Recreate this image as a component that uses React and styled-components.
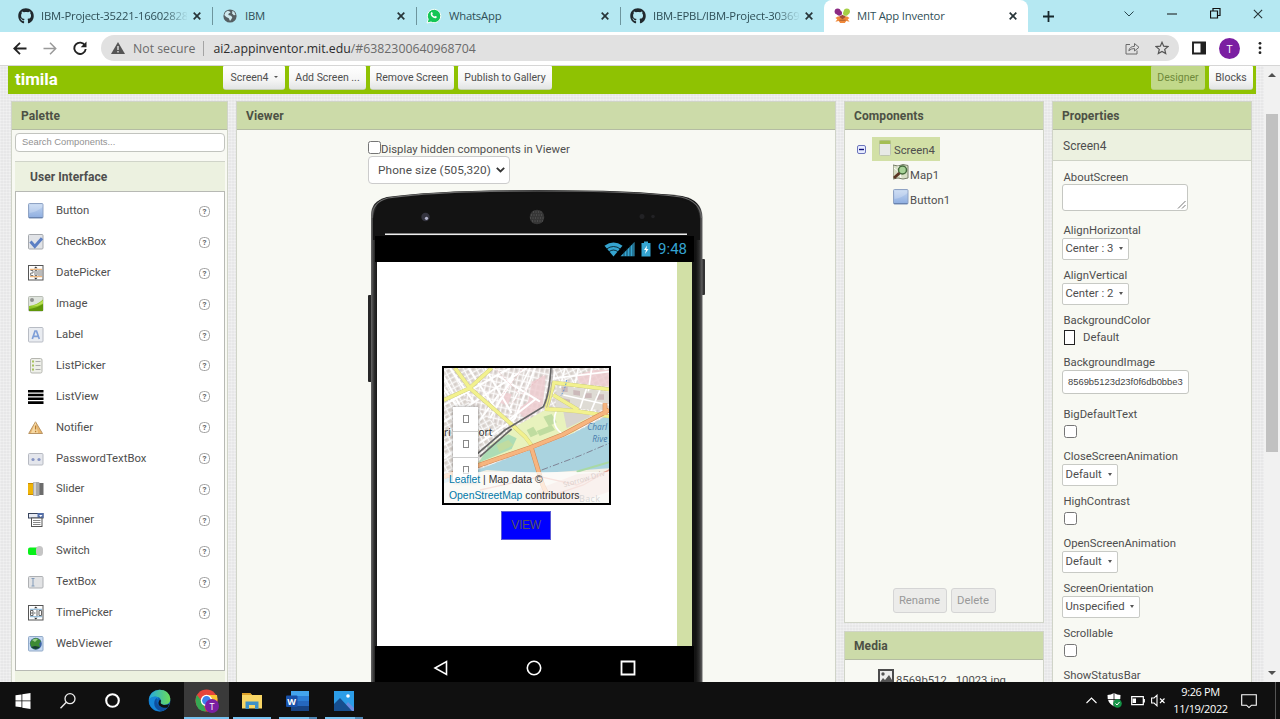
import React from "react";
import styled, { createGlobalStyle } from "styled-components";
import { FaGithub } from "react-icons/fa";

const Global = createGlobalStyle`
  * { box-sizing: border-box; }
  html, body { margin: 0; padding: 0; overflow: hidden; }
  body { font-family: Roboto, "Liberation Sans", sans-serif; font-size: 11.3px; color: #4e4e4e; }
  svg { display: block; flex: none; }
`;

const Window = styled.div`
  width: 1280px;
  height: 719px;
  display: flex;
  flex-direction: column;
  overflow: hidden;
  background: #fff;
`;

/* ---------- browser chrome ---------- */
const TabStrip = styled.div`
  flex: none;
  height: 32px;
  display: flex;
  padding-left: 8px;
  background: #b5e8f2;
  font-family: "Open Sans", "Noto Sans", sans-serif;
`;
const Tab = styled.div`
  width: 204px;
  height: 32px;
  display: flex;
  align-items: center;
  padding: 0 11px 0 10px;
  position: relative;
  color: #2f4f57;
  background: ${(p) => (p.$active ? "#fff" : "transparent")};
  border-radius: ${(p) => (p.$active ? "8px 8px 0 0" : "0")};
`;
const TabIcon = styled.span`
  width: 16px;
  margin-right: 7px;
  display: flex;
  justify-content: center;
`;
const TabTitle = styled.span`
  flex: 1;
  overflow: hidden;
  white-space: nowrap;
  font-size: 11.3px;
  line-height: 18px;
  letter-spacing: -0.2px;
  margin-right: 6px;
  ${(p) => p.$fade && "mask-image: linear-gradient(90deg, #000 84%, transparent 101%);"}
`;
const Separator = styled.i`
  width: 1px;
  height: 18px;
  background: #6d959d;
  position: absolute;
  right: -1px;
  top: 7px;
`;
const NewTab = styled.div`
  width: 40px;
  display: grid;
  place-items: center;
`;
const Controls = styled.div`
  margin-left: auto;
  display: flex;
  width: 173px;
  height: 27px;
  align-items: center;
`;
const Control = styled.div`
  width: 43.3px;
  display: grid;
  place-items: center;
`;
const AddressRow = styled.div`
  flex: none;
  height: 34px;
  display: flex;
  align-items: center;
  padding: 0 6px 1px 5px;
  border-bottom: 1px solid #d6d6d6;
  font-family: "Open Sans", "Noto Sans", sans-serif;
`;
const NavButton = styled.div`
  width: 30px;
  display: grid;
  place-items: center;
`;
const Address = styled.div`
  width: 1078px;
  height: 26px;
  margin-left: 6px;
  border-radius: 13px;
  background: #e1e1e1;
  display: flex;
  align-items: center;
  padding: 0 10px;
  font-size: 12.3px;
  color: #6a6a6a;
  white-space: nowrap;
`;
const Insecure = styled.span`
  margin-left: 8px;
  padding-right: 8px;
  border-right: 1px solid #a4a4a4;
  line-height: 15px;
`;
const Url = styled.span`
  margin-left: 9px;
  flex: 1;
  b { font-weight: 400; color: #2c2c2c; }
`;
const AddressActions = styled.div`
  display: flex;
  gap: 15px;
`;
const BrowserActions = styled.div`
  display: flex;
  flex: 1;
  align-items: center;
  padding-left: 13px;
`;
const Avatar = styled.div`
  width: 21px;
  height: 21px;
  border-radius: 50%;
  background: #7b1fa2;
  color: #fff;
  display: grid;
  place-items: center;
  font-size: 11px;
  margin: 0 18px 0 13px;
`;

/* ---------- page ---------- */
const PageRow = styled.div`
  flex: none;
  height: 616px;
  display: flex;
  overflow: hidden;
`;
const Page = styled.div`
  width: 1264px;
  background-color: #e7e7e8;
  background-image: repeating-linear-gradient(0deg, rgba(255,255,255,.28) 0 1px, transparent 1px 3px),
    repeating-linear-gradient(90deg, rgba(255,255,255,.22) 0 1px, transparent 1px 3px);
`;
const Header = styled.div`
  height: 28px;
  width: 1248px;
  margin-left: 8px;
  padding: 0 3px 4px 7px;
  background: #8fc202;
  display: flex;
`;
const ProjectName = styled.h1`
  margin: 1px 0 0;
  width: 208px;
  color: #fff;
  font-size: 16.9px;
  line-height: 25px;
  font-weight: 700;
`;
const HeaderButton = styled.div`
  width: ${(p) => p.$w}px;
  height: 24px;
  margin-right: ${(p) => (p.$last ? 0 : 4)}px;
  border-radius: 1px 1px 3px 3px;
  padding-bottom: 1px;
  display: flex;
  align-items: center;
  justify-content: center;
  gap: 5px;
  white-space: nowrap;
  font-size: 10.5px;
  color: ${(p) => (p.$off ? "#6f8a3b" : "#4e4e4e")};
  background: ${(p) => (p.$off ? "#c1d88a" : "linear-gradient(#fff, #f5f5f5 60%, #e2e4e4)")};
  border-bottom: 1px solid ${(p) => (p.$off ? "#b0cc70" : "#c3cdb0")};
`;
const Spacer = styled.div`flex: 1;`;
const Caret = styled.i`
  border: ${(p) => p.$s || 2.5}px solid transparent;
  border-top: ${(p) => (p.$s || 2.5) + 0.5}px solid #555;
  border-bottom: 0;
`;
const Panels = styled.div`
  display: flex;
  align-items: flex-start;
  padding: 7px 0 0 11px;
  gap: 8px;
`;
const Column = styled.div`
  display: flex;
  flex-direction: column;
  gap: 8px;
`;
const Panel = styled.section`
  width: ${(p) => p.$w}px;
  height: ${(p) => p.$h || 700}px;
  border: 1px solid #d0d4c8;
  background: #f8f9f3;
  display: flex;
  flex-direction: column;
  overflow: hidden;
`;
const PanelTitle = styled.h2`
  flex: none;
  margin: 0;
  height: 28px;
  padding: 0 9px;
  background: #ccdba9;
  border-bottom: 1px solid #b4bca3;
  font-size: 12px;
  line-height: 29px;
  font-weight: 700;
  letter-spacing: 0.1px;
  color: #4c5145;
`;

/* ---------- palette ---------- */
const Search = styled.div`
  height: 19px;
  margin: 3px 2px 0 3px;
  border: 1px solid #c2c4bf;
  border-radius: 4px;
  background: #fff;
  padding: 0 6px;
  font: 9.4px/16px "Liberation Sans", sans-serif;
  color: #929292;
`;
const Category = styled.div`
  height: 30px;
  margin: 9px 2px 0 3px;
  padding-left: 15px;
  background: #ecf1e0;
  border-top: 1px solid #d0d4c9;
  font-size: 12px;
  font-weight: 700;
  line-height: 31px;
  letter-spacing: 0.05px;
`;
const PaletteList = styled.div`
  height: 480px;
  margin: 0 2px 0 3px;
  border: 1px solid #b7b9b4;
  background: #fff;
  padding: 4px 0;
`;
const PaletteItem = styled.div`
  height: 30.9px;
  display: flex;
  align-items: center;
  padding: 0 14px 0 12px;
  span { flex: 1; margin: 0 0 1px 12px; white-space: nowrap; }
`;
const Help = styled.i`
  width: 11px;
  height: 11px;
  border: 1px solid #a2a2a2;
  border-radius: 4.5px;
  font: 700 8px/9px Roboto, sans-serif;
  text-align: center;
  color: #666;
`;
const NextCategory = styled.div`
  height: 30px;
  margin: 0 2px 0 3px;
  background: #ecf1e0;
`;

/* ---------- viewer ---------- */
const ViewerBody = styled.div`
  margin-left: 131px;
`;
const CheckRow = styled.div`
  display: flex;
  height: 15px;
  margin-top: 11px;
  span { line-height: 18px; letter-spacing: 0.03px; white-space: nowrap; }
`;
const Check = styled.i`
  width: 13px;
  height: 13px;
  border: 1px solid #767676;
  border-radius: 2.5px;
  background: #fff;
`;
const SizeSelect = styled.div`
  width: 142px;
  height: 28px;
  border: 1px solid #ccc;
  border-radius: 4px;
  background: #fff;
  display: flex;
  align-items: center;
  justify-content: space-between;
  padding: 0 4px 0 9px;
  font-size: 11.8px;
  letter-spacing: 0.12px;
`;
const Phone = styled.div`
  display: grid;
  width: 340px;
  height: 500px;
  margin-top: 6px;
  > * { grid-area: 1 / 1; }
`;
const PhoneFront = styled.div`
  z-index: 1;
  margin: 46px 0 0 7px;
  width: 319px;
  display: flex;
  flex-direction: column;
`;
const StatusBar = styled.div`
  height: 26px;
  background: #000;
  display: flex;
  align-items: center;
  justify-content: flex-end;
  gap: 6px;
  padding-right: 7px;
  font-size: 15px;
  color: #35a4d0;
`;
const Screen = styled.div`
  height: 384px;
  margin: 0 2px;
  background: #fff;
  border-right: 15px solid #d2e0a6;
  display: flex;
  flex-direction: column;
  align-items: center;
  padding: 104px 1px 0 0;
`;
const NavBar = styled.div`
  height: 44px;
  background: #000;
  display: flex;
  justify-content: space-around;
  padding: 14px 19.5px 0 19px;
`;
const MapFrame = styled.div`
  width: 169px;
  height: 139px;
  border: 2px solid #000;
  display: grid;
  overflow: hidden;
  > * { grid-area: 1 / 1; }
`;
const MapControls = styled.div`
  width: 25px;
  height: 76px;
  margin: 39px 0 0 9px;
  background: #fff;
  box-shadow: 0 0 3px rgba(0,0,0,.45);
  display: grid;
  grid-template-rows: repeat(3, 25.3px);
  div { display: grid; place-items: center; border-bottom: 1px solid #ccc; }
  i { width: 6px; height: 8px; border: 1px solid #888; }
`;
const Attribution = styled.div`
  align-self: end;
  height: 31px;
  padding-left: 5px;
  background: rgba(255,255,255,.7);
  font: 10.4px/16px "Liberation Sans", sans-serif;
  color: #333;
  white-space: nowrap;
  z-index: 1;
  b { font-weight: 400; color: #0078a8; }
`;
const ViewButton = styled.div`
  width: 50px;
  height: 29px;
  margin: 6px 1px 0 0;
  background: #00f;
  border: 1px solid #5c5cd8;
  font: 12px/27px "Liberation Sans", sans-serif;
  letter-spacing: -0.3px;
  text-align: center;
  color: #55555c;
`;

/* ---------- components / media ---------- */
const Tree = styled.div`
  flex: 1;
  padding: 7px 0 0 12px;
`;
const TreeRoot = styled.div`
  display: flex;
  align-items: center;
  height: 24px;
`;
const Selected = styled.div`
  margin-left: 6px;
  width: 68px;
  height: 24px;
  background: #d2e0a6;
  display: flex;
  padding: 3px 0 0 7px;
  gap: 3px;
  span { line-height: 22px; }
`;
const TreeLeaf = styled.div`
  height: 25px;
  margin-left: 36px;
  padding-top: 3px;
  display: flex;
  gap: 1px;
  span { line-height: 23px; letter-spacing: 0.1px; }
`;
const PanelActions = styled.div`
  display: flex;
  gap: 4px;
  justify-content: center;
  padding-bottom: 9px;
`;
const DisabledButton = styled.div`
  width: ${(p) => p.$w}px;
  height: 25px;
  border: 1px solid #d5d5d5;
  border-radius: 3px;
  background: #ececea;
  color: #999;
  text-align: center;
  line-height: 24px;
`;
const MediaItem = styled.div`
  display: flex;
  margin: 9px 0 0 33px;
  gap: 2px;
  span { line-height: 23px; }
`;

/* ---------- properties ---------- */
const Target = styled.div`
  height: 31px;
  background: #ecf1e0;
  border-bottom: 1px solid #ced2c6;
  padding-left: 10px;
  font-size: 12px;
  line-height: 32px;
`;
const PropertyList = styled.div`
  padding: 8px 0 0 9px;
`;
const Property = styled.div`
  height: ${(p) => p.$h}px;
`;
const PropertyName = styled.div`
  height: 15px;
  line-height: 17px;
  padding-left: 1.5px;
`;
const TextArea = styled.div`
  width: 126px;
  height: 27px;
  border: 1px solid #c5c7c2;
  border-radius: 3px;
  background: #fff;
  display: flex;
  align-items: flex-end;
  justify-content: flex-end;
  padding: 1px;
`;
const Dropdown = styled.div`
  width: ${(p) => p.$w}px;
  height: 22px;
  margin-top: 1px;
  border: 1px solid #c8cac5;
  border-radius: 2px;
  background: #fff;
  display: flex;
  align-items: center;
  justify-content: space-between;
  padding: 0 5px 2px 2.5px;
`;
const PropertyCheck = styled(Check)`
  display: block;
  margin: 4px 0 0 2px;
`;
const ColorRow = styled.div`
  display: flex;
  align-items: center;
  gap: 8px;
  height: 20px;
  padding-left: 2px;
`;
const Swatch = styled.i`
  width: 11px;
  height: 15px;
  border: 1px solid #222;
  background: #fff;
`;
const AssetField = styled.div`
  width: 127px;
  height: 24px;
  margin-top: 1px;
  border: 1px solid #c5c7c2;
  border-radius: 3px;
  background: #fff;
  padding-left: 5px;
  font: 9.4px/22px "Liberation Sans", sans-serif;
  color: #444;
`;
const Scrollbar = styled.div`
  width: 16px;
  background: #f1f1f1;
  display: flex;
  flex-direction: column;
  align-items: center;
  padding: 7px 0 7px;
`;
const Thumb = styled.div`
  width: 12px;
  height: 338px;
  margin: 37px 0 auto;
  background: #c1c1c1;
`;
const Arrow = styled.i`
  border: 4px solid transparent;
  ${(p) => (p.$up ? "border-top: 0; border-bottom-color: #505050;" : "border-bottom: 0; border-top-color: #505050;")}
`;

/* ---------- taskbar ---------- */
const Taskbar = styled.div`
  height: 37px;
  background: #101010;
  display: flex;
  color: #fff;
`;
const TaskItem = styled.div`
  width: ${(p) => p.$w || 45}px;
  display: grid;
  place-items: center;
  background: ${(p) => (p.$active ? "#3a3a3a" : "transparent")};
  box-shadow: ${(p) => (p.$active ? "inset 0 -2px #76c1f0" : "none")};
`;
const Running = styled(TaskItem)`
  background: linear-gradient(90deg, #76c1f0 ${(p) => (p.$multi ? 80 : 100)}%, #5088b5 0) bottom / 38px 2px no-repeat;
`;
const Tray = styled.div`
  margin-left: auto;
  width: 195px;
  display: flex;
  align-items: center;
`;
const TrayIcon = styled.div`
  width: ${(p) => p.$w}px;
  display: grid;
  place-items: center;
`;
const Clock = styled.div`
  width: 59px;
  text-align: center;
  font: 11px/17px "Open Sans", sans-serif;
  letter-spacing: -0.4px;
  margin-top: -1px;
`;
const ShowDesktop = styled.div`
  margin-left: auto;
  width: 5px;
  height: 37px;
  border-left: 1px solid #555;
`;

/* ---------- icons ---------- */
const CloseX = ({ s = 8, c = "#273539", w = 1.7 }) => (
  <svg width={s} height={s} viewBox="0 0 8 8"><path d="M.7.7l6.6 6.6M7.3.7L.7 7.3" stroke={c} strokeWidth={w} /></svg>
);
const Globe = () => (
  <svg width="14" height="14" viewBox="0 0 14 14">
    <circle cx="7" cy="7" r="6.6" fill="#555f63" />
    <path d="M2.500 3.200l2.200-1.400 2 .6.800 1.200-1.800 1-.4 1.500L8 6.800l1.300 1.500-.8 1.700L7 12 5.800 9.300 3.200 8 1.300 6z" fill="#cfe9ee" />
    <path d="M9.300 1.800l2 1.300L12.500 6l-1.700.2L9.200 4.600z" fill="#cfe9ee" />
  </svg>
);
const MitLogo = () => (
  <svg width="17" height="16" viewBox="0 0 18 17">
    <circle cx="3.800" cy="3.800" r="3.200" fill="#8c2a83" /><circle cx="5.700" cy="5.400" r="2.800" fill="#8c2a83" />
    <circle cx="13.600" cy="3.800" r="3.300" fill="#a5cf45" /><circle cx="12.300" cy="5.600" r="2.700" fill="#a5cf45" />
    <path d="M4 9h10l2.500 1.500-2 1.500 2 2.500-3.500-.7-1.500 2.200h-5L5 13.800l-3.500.7 2-2.500-2-1.500z" fill="#f0893a" />
    <path d="M5.400 9.400L9 7.300l3.600 2.100L9 12z" fill="#a14e35" />
    <path d="M5.700 13h6.600" stroke="#b0612f" strokeWidth="1.200" />
  </svg>
);
const WhatsAppIcon = () => (
  <svg width="16" height="16" viewBox="0 0 16 16">
    <path d="M1 15l1.200-3.700A6.700 6.700 0 1 1 5 14z" fill="#14c656" stroke="#fff" strokeWidth="1" />
    <g transform="translate(3.5 3.3) scale(.7)"><path d="M2.400 1.600c.5-.8 1.300-.6 1.700.2l.6 1.500-.8 1.200C4.600 6 5.700 6.900 7.200 7.600l1.100-1 1.900 1c.5.4.2 1.500-.6 2C6.800 11.400 1.200 7 1.700 3.300z" fill="#fff" /></g>
  </svg>
);

const Box = ({ children }) => <svg width="16" height="16" viewBox="0 0 16 16">{children}</svg>;
const frame = { x: 0.5, y: 0.5, width: 14.5, height: 14.5, rx: 1 };
const icons = {
  Button: (
    <Box>
      <defs><linearGradient id="blue" x2="0" y2="1"><stop stopColor="#c4d7f1" /><stop offset="1" stopColor="#8dade0" /></linearGradient></defs>
      <rect {...frame} fill="url(#blue)" stroke="#8fa3c4" /><path d="M1.500 10Q9 9 14.500 4V1.500h-13z" fill="#fff" opacity=".22" />
      <path d="M1 14.600h13.600" stroke="#667fac" />
    </Box>
  ),
  CheckBox: <Box><rect {...frame} fill="#e1e3e7" stroke="#a5a8ad" /><path d="M2.500 7.500l4.300 5L14 4.200" fill="none" stroke="#5c7fc4" strokeWidth="3" /></Box>,
  DatePicker: (
    <Box><rect {...frame} rx="0" fill="#fff" stroke="#555" /><path d="M6 3.300L7.800 1.500l1.800 1.800zM6 12.700l1.800 1.800 1.800-1.800z" fill="#333" />
      <path d="M2 4.300h12M2 11.700h12" stroke="#eba55f" /><path d="M2.500 5.500h2.500v2.500H2.700v2.500h2.600M7 5.500h2v5H7zM11 5v6M13 5v6" fill="none" stroke="#777" /></Box>
  ),
  Image: (
    <Box><rect {...frame} fill="#dfe4dd" stroke="#b8bdb5" /><circle cx="4" cy="4" r="2" fill="#8e918e" />
      <path d="M1 10Q9 9 15 3.500V15H1z" fill="#8fc529" /><path d="M1 13Q9 12 15 8v7H1z" fill="#5f960a" /><path d="M3 10Q9 9.500 15 4.500v3Q9 11 3 10z" fill="#b8df52" /></Box>
  ),
  Label: <Box><rect {...frame} fill="#e9ecf1" stroke="#b8bcc4" /><path d="M4.300 12L7 4h1.500l2.800 8M5.400 9.300h4.800" fill="none" stroke="#7f9fd8" strokeWidth="1.700" /></Box>,
  ListPicker: (
    <Box><rect x="2.500" y=".5" width="11.500" height="14.500" rx="1.500" fill="#eeefe9" stroke="#b5b6b0" />
      <path d="M4 3.500h2M4 7.500h2M4 11.500h2" stroke="#a6c25c" strokeWidth="1.800" /><path d="M7.500 3.500h5M7.500 7.500h5M7.500 11.500h5" stroke="#aaa" /></Box>
  ),
  ListView: <Box><path d="M0 2.300h15.500M0 6h15.500M0 9.800h15.500M0 13.600h15.500" stroke="#000" strokeWidth="2.600" /></Box>,
  Notifier: <Box><path d="M7.500 1.800L14.500 13.500H.7z" fill="#e9b66d" stroke="#b99565" /><path d="M7.500 2L10 13H3z" fill="#f6d9a4" /><path d="M7.600 5.500v4M7.600 10.800v1.500" stroke="#b87d2e" strokeWidth="1.300" /></Box>,
  PasswordTextBox: <Box><rect x=".5" y="2.500" width="14.500" height="11.500" rx="1" fill="#e4e6ec" stroke="#b7bac2" /><circle cx="5" cy="8.500" r="1.600" fill="#8795c3" /><circle cx="11" cy="8.500" r="1.600" fill="#8795c3" /></Box>,
  Slider: <Box><rect y="2" width="6" height="12" fill="#efb408" /><rect x="10" y="2" width="5.500" height="12" fill="#6c6c6c" /><rect x="5" y="1" width="6.500" height="14" rx="1" fill="#aaa" /><path d="M7 1.500v13" stroke="#e2e2e2" strokeWidth="1.500" /><path d="M0 2.500h5M0 13.500h5" stroke="#c98b00" /></Box>,
  Spinner: <Box><rect x=".5" y="1.500" width="14.500" height="4.500" fill="#e6eaf3" stroke="#37435c" /><rect x="9.500" y="1" width="6" height="5" fill="#536fab" /><path d="M11 3h3.500L12.700 5z" fill="#fff" /><rect x="3.500" y="6" width="10.500" height="8.500" fill="#fff" stroke="#555" /><path d="M5 8.500h7.500M5 10.500h7.500M5 12.500h7.500" stroke="#888" /></Box>,
  Switch: <Box><rect y="4.500" width="13" height="7.500" rx="2" fill="#08f019" /><rect x="8" y="3" width="7" height="10" rx="3.500" fill="#c5c5c5" /></Box>,
  TextBox: <Box><rect x=".5" y="2.500" width="14.500" height="11.500" rx="1" fill="#e2e3e5" stroke="#aeb0b3" /><path d="M3.500 4.500h3M3.500 12h3M5 4.500V12" stroke="#829bb8" /></Box>,
  TimePicker: (
    <Box><rect {...frame} rx="0" fill="#fff" stroke="#555" /><path d="M6 3.300L7.800 1.500l1.800 1.800zM6 12.700l1.800 1.800 1.800-1.800z" fill="#333" />
      <path d="M2 4.300h12M2 11.700h12" stroke="#7eaed1" /><path d="M2.500 5.500h2.500v5H2.500zM2.500 8H5M6 8h1.500M9 5v6M11 5.500h2.500v5H11z" fill="none" stroke="#666" /></Box>
  ),
  WebViewer: <Box><rect {...frame} fill="#c7daf1" stroke="#92aac8" /><circle cx="7.800" cy="7.800" r="6" fill="#3d64a5" /><path d="M2 7Q4 2 9 2l4 3-2 3 1 3-4 2.500Q3 13 2 7z" fill="#3d8b34" /><path d="M4 4Q7 2 10 3L7 6z" fill="#98cc88" /><path d="M3 11q5 4 9 0l-5-1z" fill="#173e39" /></Box>,
};
const Star = () => (
  <svg width="14" height="14" viewBox="0 0 14 14"><path d="M7 1.300l1.700 3.900 4.200.4-3.200 2.800 1 4.200L7 10.400l-3.700 2.200 1-4.200L1.100 5.600l4.200-.4z" fill="none" stroke="#555" strokeWidth="1.200" /></svg>
);

const roads = { fill: "none", stroke: "#fff", strokeWidth: 6 };
const MapPicture = () => (
  <svg width="165" height="135" viewBox="42 39 495 405" preserveAspectRatio="none">
    <defs>
      <pattern id="blocks" width="17" height="15" patternUnits="userSpaceOnUse" patternTransform="rotate(-28)">
        <rect width="17" height="15" fill="#e4dfdc" /><path d="M0 1h17M1 0v15" stroke="#fff" strokeWidth="3" /><path d="M5 5h8v6H5z" fill="#d2cbc5" />
      </pattern>
      <pattern id="blocks2" width="15" height="18" patternUnits="userSpaceOnUse" patternTransform="rotate(12)">
        <rect width="15" height="18" fill="#e7e0dd" /><path d="M0 1h15M1 0v18" stroke="#fff" strokeWidth="3" /><path d="M5 5h6v9H5z" fill="#d0c9c6" />
      </pattern>
    </defs>
    <rect x="42" y="39" width="495" height="405" fill="url(#blocks)" />
    <path d="M190 39H375L350 160 240 240 100 130z" fill="url(#blocks2)" />
    <path d="M305 80l42-20-8 90-50 45-30-30 35-25zM220 110l25 8-12 35-28-12zM440 60l50-15h47v50l-90-10z" fill="#edcdd0" opacity=".85" />
    <path d="M380 90l157 20v55l-160-5z" fill="#dedbd4" />
    <path d="M395 95h18v16h-18zM430 105l20 3v14l-20-3zM465 115h20v14h-20zM500 118h22v16h-22zM400 130l20 4v12l-20-4z" fill="#cbb9b9" />
    <path d="M140 330L180 270 255 215 345 165 420 165 480 195 430 235 300 275 140 335z" fill="#e8f2bd" />
    <path d="M142 330L175 275 235 238 260 250 245 282 142 325z" fill="#addcb5" />
    <path d="M200 270l35-15 15 16-42 20zM290 225l20-10 14 22-22 10zM340 185l25-8 15 25-24 12zM320 228l45-18 10 15-46 18z" fill="#c0dca0" />
    <path d="M400 170l45-10 35 25-70 35z" fill="#d8d4ce" />
    <path d="M42 372L150 342 300 285 430 235 537 180V352L430 362 145 444H42z" fill="#aad3df" />
    <path d="M42 385L170 345 330 355 537 340V444H42z" fill="#f2efe4" />
    <path d="M330 400l110-42 97-8v60L440 444H300z" fill="#e8c4ba" opacity=".7" />
    <path d="M440 350L537 322" stroke="#a9d9a4" strokeWidth="6" />
    <g {...roads}>
      <path d="M42 150L240 39M42 200L290 39M60 39l70 100M115 39l80 120M165 39l80 135M42 100l85 120M95 150l75 100M140 270L255 190 315 39M42 270l100-60M42 310l70-50M180 190l70-120M230 200l90-70M200 60l130 80M200 155l50-100M42 65l50 90M120 235l85-115" />
      <path d="M375 50l-10 50M405 39l-15 60M445 39l-12 60M485 39l-10 70M370 70l167-20M400 120l137 30M470 100l-20 60M510 105l-30 70M380 165Q360 210 395 235M300 39l-60 120" strokeWidth="5" />
    </g>
    <path d="M195 39l70 75M280 39l-70 90M340 60l-95 85" stroke="#e4a8ae" strokeWidth="1.500" strokeDasharray="4 3" fill="none" />
    <g fill="none" stroke="#c8c57d" strokeWidth="12">
      <path d="M75 39L120 100 230 195 285 245 310 278M42 135L118 100 185 39M350 158L372 83 537 103M370 120L445 165M345 162Q440 165 537 184" />
    </g>
    <g fill="none" stroke="#f2f18e" strokeWidth="10">
      <path d="M75 39L120 100 230 195 285 245 310 278M42 135L118 100 185 39M350 158L372 83 537 103M370 120L445 165M345 162Q440 165 537 184" />
    </g>
    <g fill="none" stroke="#666" strokeWidth="5"><path d="M140 298L225 225 340 155Q358 120 363 39M150 305L245 222" /><path d="M350 158Q366 110 368 39" stroke="#999" strokeWidth="2" /></g>
    <g fill="none" stroke="#cd8856" strokeWidth="14"><path d="M42 365L140 333 300 278 400 238 500 185 537 165M303 275L338 390 350 415M525 145v35" /></g>
    <g fill="none" stroke="#f7b57f" strokeWidth="11"><path d="M42 365L140 333 300 278 400 238 500 185 537 165M303 275L338 390 350 415M525 145v35" /></g>
    <path d="M335 345L450 302 537 265" stroke="#7f8496" strokeWidth="3" strokeDasharray="20 6 4 6" fill="none" />
    <path d="M150 405L330 365 440 390 537 345M370 420l90-30 77-45" fill="none" stroke="#e09f90" strokeWidth="4" />
    <path d="M410 75q-5 30-18 48" fill="none" stroke="#468ce1" strokeWidth="3" strokeDasharray="5 5" />
    <g fontFamily="Noto Sans, sans-serif">
      <text x="42" y="244" fontSize="30" fill="#333">ri</text>
      <text x="127" y="244" fontSize="30" fill="#333">port</text>
      <text x="472" y="226" fontSize="25" fontStyle="italic" fill="#4c7fae">Charl</text>
      <text x="487" y="261" fontSize="25" fontStyle="italic" fill="#4c7fae">Rive</text>
      <text x="402" y="397" fontSize="22" fill="#835e55" transform="rotate(-16 402 397)">Storrow Driv</text>
      <text x="447" y="440" fontSize="27" letterSpacing="1" fill="#777">Back</text>
    </g>
  </svg>
);

const PhoneShell = () => (
  <svg width="340" height="500" viewBox="368 190 340 500">
    <defs><linearGradient id="edge"><stop stopColor="#666" /><stop offset=".01" stopColor="#2c2c2c" /><stop offset=".02" stopColor="#131313" /><stop offset=".98" stopColor="#131313" /><stop offset=".99" stopColor="#2c2c2c" /><stop offset="1" stopColor="#666" /></linearGradient></defs>
    <rect x="368" y="295" width="5" height="87" rx="1" fill="#272727" /><rect x="700" y="259" width="5" height="36" rx="1" fill="#333" />
    <path d="M371 690V215Q371 201 387 197 435 190 537 190 635 190 682 196 702 200 702.500 217V690z" fill="url(#edge)" />
    <path d="M372 218Q372 202 388 198 435 191 537 191 635 191 681 197 700 201 701.500 218" fill="none" stroke="#6a6a6a" strokeWidth="1.200" />
    <path d="M373 240V219Q374 204 390 200 440 193 537 193 635 193 679 199 699 203 700 219V240z" fill="#131313" />
    <circle cx="425.500" cy="217" r="4.200" fill="#34343f" /><circle cx="426.500" cy="218.300" r="1.600" fill="#b4b5cc" />
    <circle cx="537" cy="217" r="7.300" fill="#363636" />
    <g stroke="#5f5f5f" strokeDasharray="1 1.500"><path d="M533 212h9M531 215h12M530 218h14M532 221h11" /></g>
    <circle cx="642" cy="216.500" r="2.500" fill="#222225" /><circle cx="653" cy="216.500" r="1.800" fill="#222225" />
    <path d="M385 234.200h302" stroke="#eee" strokeWidth="1.500" />
  </svg>
);

const StatusIcons = () => (
  <svg width="48" height="17" viewBox="605 240 48 17">
    <path d="M605.500 244.800q9-6.600 18 0l-9 10.700z" fill="#35a4d0" />
    <g fill="none" stroke="#031015" strokeWidth=".8"><path d="M607.500 248q7-5 14 0M609.800 250.800q4.700-3.500 9.400 0" /></g>
    <path d="M621.500 255.300L635.500 241v14.300z" fill="#35a4d0" />
    <path d="M625 249v7M628 247v9M631 244v12M634 242v14" stroke="#06212b" strokeWidth=".7" />
    <path d="M642.500 242h2.500v-1.500h4V242h2.500v13.500h-9z" fill="#35a4d0" /><path d="M648 244.500l-3 4.500h2l-1 4 3.500-5h-2z" fill="#fff" />
  </svg>
);

const Select = ({ w, children }) => <Dropdown $w={w}>{children}<Caret /></Dropdown>;
const properties = [
  ["AboutScreen", 53, <TextArea key="a"><svg width="9" height="9" viewBox="0 0 9 9"><path d="M1 8.500L8.500 1M5 8.500L8.500 5" stroke="#777" /></svg></TextArea>],
  ["AlignHorizontal", 45, <Select key="b" w={67}>Center : 3</Select>],
  ["AlignVertical", 45, <Select key="c" w={67}>Center : 2</Select>],
  ["BackgroundColor", 42, <ColorRow key="d"><Swatch />Default</ColorRow>],
  ["BackgroundImage", 52, <AssetField key="e">8569b5123d23f0f6db0bbe3</AssetField>],
  ["BigDefaultText", 42, <PropertyCheck key="f" />],
  ["CloseScreenAnimation", 45, <Select key="g" w={56}>Default</Select>],
  ["HighContrast", 42, <PropertyCheck key="h" />],
  ["OpenScreenAnimation", 45, <Select key="i" w={56}>Default</Select>],
  ["ScreenOrientation", 45, <Select key="j" w={78}>Unspecified</Select>],
  ["Scrollable", 42, <PropertyCheck key="k" />],
  ["ShowStatusBar", 40, null],
];

const tabs = [
  { icon: <FaGithub size={16} color="#20292e" />, title: "IBM-Project-35221-16602828", fade: true },
  { icon: <Globe />, title: "IBM" },
  { icon: <WhatsAppIcon />, title: "WhatsApp" },
  { icon: <FaGithub size={16} color="#20292e" />, title: "IBM-EPBL/IBM-Project-30369", fade: true },
  { icon: <MitLogo />, title: "MIT App Inventor", active: true },
];

const BrowserChrome = () => (
  <>
    <TabStrip>
      {tabs.map((t, i) => (
        <Tab key={i} $active={t.active}>
          <TabIcon>{t.icon}</TabIcon>
          <TabTitle $fade={t.fade}>{t.title}</TabTitle>
          <CloseX />
          {i < 3 && <Separator />}
        </Tab>
      ))}
      <NewTab><svg width="11" height="11" viewBox="0 0 11 11"><path d="M5.500 0v11M0 5.500h11" stroke="#17282d" strokeWidth="1.800" /></svg></NewTab>
      <Controls>
        <Control><svg width="10" height="6" viewBox="0 0 10 6"><path d="M.5.5L5 5 9.500.5" fill="none" stroke="#28464d" /></svg></Control>
        <Control><svg width="10" height="2"><path d="M0 1h10" stroke="#111" /></svg></Control>
        <Control><svg width="11" height="11" viewBox="0 0 11 11"><path d="M.5 3h7v7h-7zM3 3V.5h7v7H7.500" fill="none" stroke="#111" strokeWidth="1.200" /></svg></Control>
        <Control><CloseX s={10} w={0.9} /></Control>
      </Controls>
    </TabStrip>
    <AddressRow>
      <NavButton><svg width="14" height="13" viewBox="0 0 14 13"><path d="M13.500 6.500H1.500M7 .8L1.300 6.500 7 12.200" fill="none" stroke="#222" strokeWidth="1.800" /></svg></NavButton>
      <NavButton><svg width="14" height="13" viewBox="0 0 14 13"><path d="M.5 6.500h12M7 .8l5.700 5.700L7 12.200" fill="none" stroke="#999" strokeWidth="1.500" /></svg></NavButton>
      <NavButton><svg width="14" height="14" viewBox="0 0 14 14"><path d="M12 4.500A5.700 5.700 0 1 0 12.700 8" fill="none" stroke="#222" strokeWidth="1.900" /><path d="M13.500.5v5.800H7.700z" fill="#222" /></svg></NavButton>
      <Address>
        <svg width="14" height="12" viewBox="0 0 14 12"><path d="M7 0l7 12H0z" fill="#555" /><path d="M7 4v4M7 9v1.500" stroke="#e1e1e1" strokeWidth="1.400" /></svg>
        <Insecure>Not secure</Insecure>
        <Url><b>ai2.appinventor.mit.edu</b>/#6382300640968704</Url>
        <AddressActions>
          <svg width="15" height="14" viewBox="0 0 15 14"><path d="M5 3.500H1v9.500h11V9.500M3.800 9.800Q4.500 5.500 9.500 5.300V2.500L14 6.300 9.500 10V7.500Q6 7.500 3.800 9.800z" fill="none" stroke="#6b6b6b" /></svg>
          <Star />
        </AddressActions>
      </Address>
      <BrowserActions>
        <svg width="14" height="14" viewBox="0 0 14 14"><path d="M1 1.500h12v11H1z" fill="none" stroke="#202020" strokeWidth="1.900" /><path d="M8.500 1H14v12H8.500z" fill="#202020" /></svg>
        <Avatar>T</Avatar>
        <svg width="4" height="14" viewBox="0 0 4 14"><g fill="#222"><circle cx="2" cy="2.300" r="1.400" /><circle cx="2" cy="7" r="1.400" /><circle cx="2" cy="11.700" r="1.400" /></g></svg>
      </BrowserActions>
    </AddressRow>
  </>
);

const DesktopTaskbar = () => (
  <Taskbar>
    <TaskItem><svg width="16" height="16" viewBox="0 0 16 16"><path d="M.5 2.300L6.500 1.400v6H.5zM7.300 1.300L15.500 0v7.400H7.300zM.5 8.300h6v6l-6-.9zM7.300 8.300h8.200V16l-8.200-1.300z" fill="#fff" /></svg></TaskItem>
    <TaskItem><svg width="16" height="16" viewBox="0 0 16 16"><circle cx="10" cy="5.700" r="5" fill="none" stroke="#eee" strokeWidth="1.300" /><path d="M6.300 9.300L.5 15.300" stroke="#eee" strokeWidth="1.400" /></svg></TaskItem>
    <TaskItem><svg width="15" height="15" viewBox="0 0 15 15"><circle cx="7.500" cy="7.500" r="6.300" fill="none" stroke="#fff" strokeWidth="2.100" /></svg></TaskItem>
    <TaskItem $w={49}>
      <svg width="23" height="23" viewBox="0 0 24 24">
        <defs><linearGradient id="edgeTop"><stop stopColor="#25a9e0" /><stop offset="1" stopColor="#6bdc57" /></linearGradient></defs>
        <circle cx="12" cy="12" r="11.300" fill="#0c63b8" />
        <path d="M1 11Q2 2 12 .7q10 0 11.300 9.300.5 6-6.500 6.500-5 0-3-4Q13 8 8 8 3 8 1 12z" fill="url(#edgeTop)" />
        <path d="M1 11q4-5 10-2-4 3-2 8 3 5 9 4-3 2.700-7 2.300Q.5 21 1 11z" fill="#1587d8" />
        <path d="M9.500 9.500q-2 6 3 9 5 2 9-.5-3 5-8 5-7-2-7-8 0-4 3-5.500z" fill="#0f4f9e" />
        <path d="M13.500 12.300q-1.500 3.500 2.800 4.300 3.500.4 6-1.200l-2 4.200Q14 20 11.500 17 10 14 12.500 11z" fill="#101010" />
      </svg>
    </TaskItem>
    <TaskItem $active>
      <svg width="24" height="24" viewBox="0 0 24 24">
        <circle cx="11.500" cy="11.500" r="11" fill="#e7443b" /><path d="M2 6l6 8 3 8.500Q1 22 .5 11.500.5 8 2 6z" fill="#35a853" /><path d="M12 6h10q2 8-4 14l-6 2.500 4-8z" fill="#fac431" />
        <circle cx="11.500" cy="11.500" r="5.700" fill="#fff" /><circle cx="11.500" cy="11.500" r="4.400" fill="#3d82ec" />
        <circle cx="17" cy="17" r="7" fill="#7b1fa2" />
        <text x="17" y="20.500" fontSize="9" fill="#fff" textAnchor="middle" fontFamily="Open Sans, sans-serif">T</text>
      </svg>
    </TaskItem>
    <Running>
      <svg width="20" height="18" viewBox="0 0 20 18"><path d="M0 1h8l2 2h10v13.500H0z" fill="#f8d665" /><path d="M0 1h8l2 2H0z" fill="#dca027" /><path d="M3.500 17V9.500h13V17h-3.500v-4H7v4z" fill="#3e91c8" /></svg>
    </Running>
    <Running $w={47} $multi>
      <svg width="23" height="20" viewBox="0 0 23 20"><rect x="5" width="18" height="20" rx="1.300" fill="#2567bf" /><path d="M5 0h18v5H5z" fill="#43a4ed" /><path d="M5 5h18v5H5z" fill="#2b7dd5" /><path d="M5 15h18v5H5z" fill="#174384" /><rect y="4.500" width="11.500" height="11.500" rx="1" fill="#1850a8" /><text x="5.700" y="13.500" fontSize="9" fontWeight="700" fill="#fff" textAnchor="middle" fontFamily="Open Sans, sans-serif">W</text></svg>
    </Running>
    <Running $w={46} $multi>
      <svg width="20" height="20" viewBox="0 0 20 20"><rect width="20" height="20" fill="#2c9de7" /><path d="M7 20l7-9 6 6v3z" fill="#6b8be0" /><path d="M0 13l6-6 12 13H0z" fill="#164e8e" /><circle cx="14" cy="5" r="1.800" fill="#fff" /></svg>
    </Running>
    <Tray>
      <TrayIcon $w={13}><svg width="11" height="7" viewBox="0 0 11 7"><path d="M.5 6L5.500 1l5 5" fill="none" stroke="#fff" strokeWidth="1.100" /></svg></TrayIcon>
      <TrayIcon $w={33}><svg width="15" height="15" viewBox="0 0 15 15"><path d="M7 0q3 2 6.500 2Q14 10 7 13.500 0 10 .5 2 4 2 7 0z" fill="#fff" /><path d="M7 0v14M0 6.500h14" stroke="#101010" strokeWidth=".8" /><circle cx="10.500" cy="10.500" r="4.300" fill="#159447" /><path d="M8.500 10.500l1.500 1.500 2.500-3" fill="none" stroke="#fff" /></svg></TrayIcon>
      <TrayIcon $w={14}><svg width="14" height="10" viewBox="0 0 14 10"><path d="M.7.7h11.600v8H.7zM13.300 3v3.500" fill="none" stroke="#fff" strokeWidth="1.200" /><path d="M1.500 2.500H5V7H1.500z" fill="#fff" /></svg></TrayIcon>
      <TrayIcon $w={26}><svg width="15" height="13" viewBox="0 0 15 13"><path d="M.6 4h2.500L6 1.200v10.600L3.100 9H.6zM9 4.500l4.500 4.500M13.500 4.500L9 9" fill="none" stroke="#fff" strokeWidth="1.100" /></svg></TrayIcon>
      <Clock>9:26 PM<br />11/19/2022</Clock>
      <TrayIcon $w={38}><svg width="16" height="16" viewBox="0 0 16 16"><path d="M.7 1.700h14.600v10.500h-4.800L8 14.600l-2.500-2.400H.7z" fill="none" stroke="#fff" strokeWidth="1.100" /></svg></TrayIcon>
      <ShowDesktop />
    </Tray>
  </Taskbar>
);

export default function App() {
  return (
    <Window>
      <Global />
      <BrowserChrome />
      <PageRow>
        <Page>
          <Header>
            <ProjectName>timila</ProjectName>
            <HeaderButton $w={62}>Screen4 <Caret $s={2} /></HeaderButton>
            <HeaderButton $w={77}>Add Screen ...</HeaderButton>
            <HeaderButton $w={84}>Remove Screen</HeaderButton>
            <HeaderButton $w={94}>Publish to Gallery</HeaderButton>
            <Spacer />
            <HeaderButton $w={54} $off>Designer</HeaderButton>
            <HeaderButton $w={44} $last>Blocks</HeaderButton>
          </Header>
          <Panels>
            <Panel $w={217}>
              <PanelTitle>Palette</PanelTitle>
              <Search>Search Components...</Search>
              <Category>User Interface</Category>
              <PaletteList>
                {Object.entries(icons).map(([name, icon]) => (
                  <PaletteItem key={name}>{icon}<span>{name}</span><Help>?</Help></PaletteItem>
                ))}
              </PaletteList>
              <NextCategory />
            </Panel>
            <Panel $w={600}>
              <PanelTitle>Viewer</PanelTitle>
              <ViewerBody>
                <CheckRow><Check /><span>Display hidden components in Viewer</span></CheckRow>
                <SizeSelect>Phone size (505,320)<svg width="9" height="6" viewBox="0 0 9 6"><path d="M.8.8l3.700 3.700L8.200.8" fill="none" stroke="#333" strokeWidth="1.800" /></svg></SizeSelect>
                <Phone>
                  <PhoneShell />
                  <PhoneFront>
                    <StatusBar><StatusIcons />9:48</StatusBar>
                    <Screen>
                      <MapFrame>
                        <MapPicture />
                        <MapControls><div><i /></div><div><i /></div><div><i /></div></MapControls>
                        <Attribution><b>Leaflet</b> | Map data ©<br /><b>OpenStreetMap</b> contributors</Attribution>
                      </MapFrame>
                      <ViewButton>VIEW</ViewButton>
                    </Screen>
                    <NavBar>
                      <svg width="16" height="16" viewBox="0 0 16 16"><path d="M13.500 1.500v13L2 8z" fill="none" stroke="#fff" strokeWidth="1.600" /></svg>
                      <svg width="16" height="16" viewBox="0 0 16 16"><circle cx="8" cy="8" r="6.700" fill="none" stroke="#fff" strokeWidth="1.600" /></svg>
                      <svg width="16" height="16" viewBox="0 0 16 16"><path d="M1.500 1.500h13v13h-13z" fill="none" stroke="#fff" strokeWidth="1.800" /></svg>
                    </NavBar>
                  </PhoneFront>
                </Phone>
              </ViewerBody>
            </Panel>
            <Column>
              <Panel $w={200} $h={522}>
                <PanelTitle>Components</PanelTitle>
                <Tree>
                  <TreeRoot>
                    <svg width="9" height="9" viewBox="0 0 9 9"><rect x=".5" y=".5" width="8" height="8" rx="1.500" fill="#e8edff" stroke="#6c75bb" /><path d="M2 4.500h5" stroke="#10107a" strokeWidth="1.400" /></svg>
                    <Selected><svg width="12" height="16" viewBox="0 0 12 16"><rect x=".5" y=".5" width="11" height="15" rx="1" fill="#e7e9e6" stroke="#bfc6b1" /><path d="M.5.5h11v3.500H.5z" fill="#a4be55" /></svg><span>Screen4</span></Selected>
                  </TreeRoot>
                  <TreeLeaf>
                    <Box><path d="M0 1l5 1 5-1.500 5 1V14l-5 1-5-1-5 1z" fill="#d8dfc6" stroke="#777d69" /><path d="M1 4l5 4-4 5M5 2l3 12" stroke="#fff" fill="none" /><circle cx="9.500" cy="6" r="4" fill="#a7d297" stroke="#456b3c" strokeWidth="1.500" /><path d="M6.500 9L1 14" stroke="#5b3624" strokeWidth="3" /></Box>
                    <span>Map1</span>
                  </TreeLeaf>
                  <TreeLeaf>{icons.Button}<span>Button1</span></TreeLeaf>
                </Tree>
                <PanelActions><DisabledButton $w={54}>Rename</DisabledButton><DisabledButton $w={45}>Delete</DisabledButton></PanelActions>
              </Panel>
              <Panel $w={200} $h={120}>
                <PanelTitle>Media</PanelTitle>
                <MediaItem>
                  <svg width="16" height="16" viewBox="0 0 16 16"><rect x="1" y="1" width="14" height="14" fill="#eee" stroke="#4c4c4c" strokeWidth="2" /><circle cx="5" cy="5" r="1.700" fill="#555" /><path d="M2 13l3-4 2 2 4-5 3 5v2z" fill="#555" /></svg>
                  <span>8569b512...10023.jpg</span>
                </MediaItem>
              </Panel>
            </Column>
            <Panel $w={200}>
              <PanelTitle>Properties</PanelTitle>
              <Target>Screen4</Target>
              <PropertyList>
                {properties.map(([name, h, editor]) => (
                  <Property key={name} $h={h}><PropertyName>{name}</PropertyName>{editor}</Property>
                ))}
              </PropertyList>
            </Panel>
          </Panels>
        </Page>
        <Scrollbar><Arrow $up /><Thumb /><Arrow /></Scrollbar>
      </PageRow>
      <DesktopTaskbar />
    </Window>
  );
}
